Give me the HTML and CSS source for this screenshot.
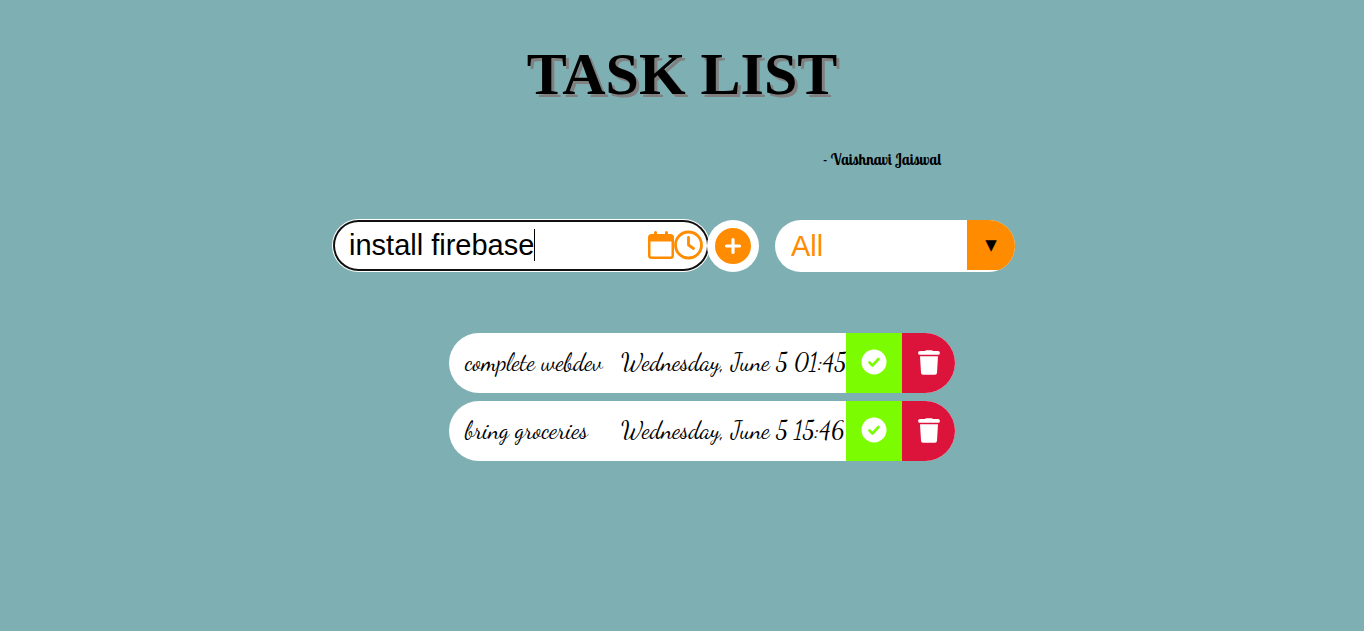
FILE: index.html
```html
<!DOCTYPE html>
<html lang="en">
<head>
<meta charset="utf-8">
<meta name="viewport" content="width=device-width, initial-scale=1">
<title>Task List</title>
<link rel="stylesheet" href="styles.css">
</head>
<body>
<header class="header">
  <h1 class="title">TASK LIST</h1>
  <p class="byline">- Vaishnavi Jaiswal</p>
</header>
<main>
  <form class="form">
    <div class="field">
      <input class="field-input" type="text" aria-label="New task" value="install firebase">
      <span class="caret"></span>
      <div class="pickers">
        <button class="picker" type="button" aria-label="Pick date">
          <svg width="26" height="30" viewBox="0 0 26 30" fill="#ff8c00"><path fill-rule="evenodd" d="M6 2.500a1.500 1.500 0 0 1 3 0V4h8V2.500a1.500 1.500 0 0 1 3 0V4h2.500A3.500 3.500 0 0 1 26 7.500v18a3.500 3.500 0 0 1-3.500 3.500h-19A3.500 3.500 0 0 1 0 25.500v-18A3.500 3.500 0 0 1 3.500 4H6zM2.500 11.500v14q0 1 1 1h19q1 0 1-1v-14z"/></svg>
        </button>
        <button class="picker" type="button" aria-label="Pick time">
          <svg width="29" height="30" viewBox="0 0 29 30" fill="none" stroke="#ff8c00" stroke-linecap="round" stroke-linejoin="round" stroke-width="2.800"><circle cx="14.500" cy="15" r="13"/><path d="M14.500 7.500V15l5 3.500"/></svg>
        </button>
      </div>
    </div>
    <button class="add" type="submit" aria-label="Add task">
      <svg width="36" height="36" viewBox="0 0 36 36"><circle cx="18" cy="18" r="18" fill="#ff8c00"/><path d="M18 11.500v13M11.500 18h13" stroke="#fff" stroke-width="3.200" stroke-linecap="round"/></svg>
    </button>
    <div class="filter">
      <select class="filter-select" aria-label="Filter tasks">
        <option>All</option>
        <option>Completed</option>
        <option>Uncompleted</option>
      </select>
      <span class="filter-arrow" aria-hidden="true">▼</span>
    </div>
  </form>
  <ul class="tasks">
    <li class="task">
      <span class="task-name">complete webdev</span>
      <span class="task-date">Wednesday, June 5 01:45</span>
      <button class="done" type="button" aria-label="Complete task">
        <svg width="26" height="26" viewBox="0 0 26 26"><circle cx="13" cy="13" r="12.500" fill="#fff"/><path d="m8.500 13.500 3 3 6-6.500" fill="none" stroke="#7cfc00" stroke-width="2.600" stroke-linecap="round" stroke-linejoin="round"/></svg>
      </button>
      <button class="trash" type="button" aria-label="Delete task">
        <svg width="22" height="26" viewBox="0 0 22 26" fill="#fff"><path d="M7 1q.5-.8 1.500-.8h5q1 0 1.500.8h5a1.900 1.900 0 0 1 0 3.800H2A1.900 1.900 0 0 1 2 1zM2 6.300h18l-1 16.500a2 2 0 0 1-2 1.900H5a2 2 0 0 1-2-1.900z"/></svg>
      </button>
    </li>
    <li class="task">
      <span class="task-name">bring groceries</span>
      <span class="task-date">Wednesday, June 5 15:46</span>
      <button class="done" type="button" aria-label="Complete task">
        <svg width="26" height="26" viewBox="0 0 26 26"><circle cx="13" cy="13" r="12.500" fill="#fff"/><path d="m8.500 13.500 3 3 6-6.500" fill="none" stroke="#7cfc00" stroke-width="2.600" stroke-linecap="round" stroke-linejoin="round"/></svg>
      </button>
      <button class="trash" type="button" aria-label="Delete task">
        <svg width="22" height="26" viewBox="0 0 22 26" fill="#fff"><path d="M7 1q.5-.8 1.500-.8h5q1 0 1.500.8h5a1.900 1.900 0 0 1 0 3.800H2A1.900 1.900 0 0 1 2 1zM2 6.300h18l-1 16.500a2 2 0 0 1-2 1.900H5a2 2 0 0 1-2-1.900z"/></svg>
      </button>
    </li>
  </ul>
</main>
</body>
</html>
```
FILE: styles.css
```css
* {
  box-sizing: border-box;
}

body {
  margin: 0;
  min-height: 100vh;
  background: #7eafb3;
  color: #000;
  font-family: "Liberation Serif", "Times New Roman", serif;
}

button {
  border: 0;
  padding: 0;
  cursor: pointer;
}

svg {
  display: block;
}

.header {
  padding-top: 40px;
  text-align: center;
}

.title {
  margin: 0;
  font-size: 60px;
  line-height: 68px;
  text-shadow: 3px 3px #808080;
}

.byline {
  margin: 40px 0 0;
  padding-left: 400px;
  font-family: "Lobster Two", "Liberation Serif", serif;
  font-size: 15px;
  line-height: 24px;
  font-weight: 700;
}

.form {
  display: flex;
  justify-content: center;
  padding: 48px 16px 0 0;
}

.field {
  position: relative;
  width: 376px;
}

.field-input {
  display: block;
  width: 100%;
  height: 51px;
  padding: 0 72px 0 16px;
  border: 0;
  border-radius: 26px;
  outline: 0;
  background: #fff;
  box-shadow: inset 0 0 0 2px #101010, 0 0 0 1px #fff;
  color: #000;
  font-family: "Liberation Sans", Arial, sans-serif;
  font-size: 29px;
}

.caret {
  position: absolute;
  top: 9px;
  left: 201px;
  width: 1px;
  height: 32px;
  background: #000;
}

.pickers {
  position: absolute;
  top: 10px;
  right: 6px;
  display: flex;
}

.picker {
  background: none;
}

.add {
  position: relative;
  display: grid;
  place-items: center;
  width: 52px;
  height: 52px;
  margin-left: -2px;
  border-radius: 50%;
  background: #fff;
}

.filter {
  position: relative;
  width: 240px;
  height: 52px;
  margin-left: 16px;
  border-radius: 26px;
  background: #fff;
  overflow: hidden;
}

.filter-select {
  width: 100%;
  height: 100%;
  padding: 0 56px 0 16px;
  border: 0;
  appearance: none;
  background: #fff;
  color: #ff8c00;
  font-family: "Liberation Sans", Arial, sans-serif;
  font-size: 29px;
}

.filter-arrow {
  position: absolute;
  top: 0;
  right: 0;
  display: grid;
  place-items: center;
  width: 48px;
  height: 50px;
  background: #ff8c00;
  font-family: "DejaVu Sans", sans-serif;
  font-size: 15px;
  pointer-events: none;
}

.tasks {
  display: flex;
  flex-direction: column;
  align-items: center;
  gap: 8px;
  margin: 61px 0 0;
  padding: 0 0 0 40px;
  list-style: none;
}

.task {
  display: grid;
  grid-template-columns: 156px 225px 56px 53px;
  align-items: center;
  height: 60px;
  padding-left: 16px;
  border-radius: 30px;
  background: #fff;
  overflow: hidden;
  font-family: "Satisfy", "Dancing Script", "Liberation Serif", serif;
  font-size: 24px;
  line-height: 32px;
  white-space: nowrap;
}

.done,
.trash {
  display: grid;
  place-items: center;
  height: 100%;
  padding-bottom: 2px;
  background: #7cfc00;
}

.trash {
  padding-bottom: 0;
  background: #dc143c;
}
```
